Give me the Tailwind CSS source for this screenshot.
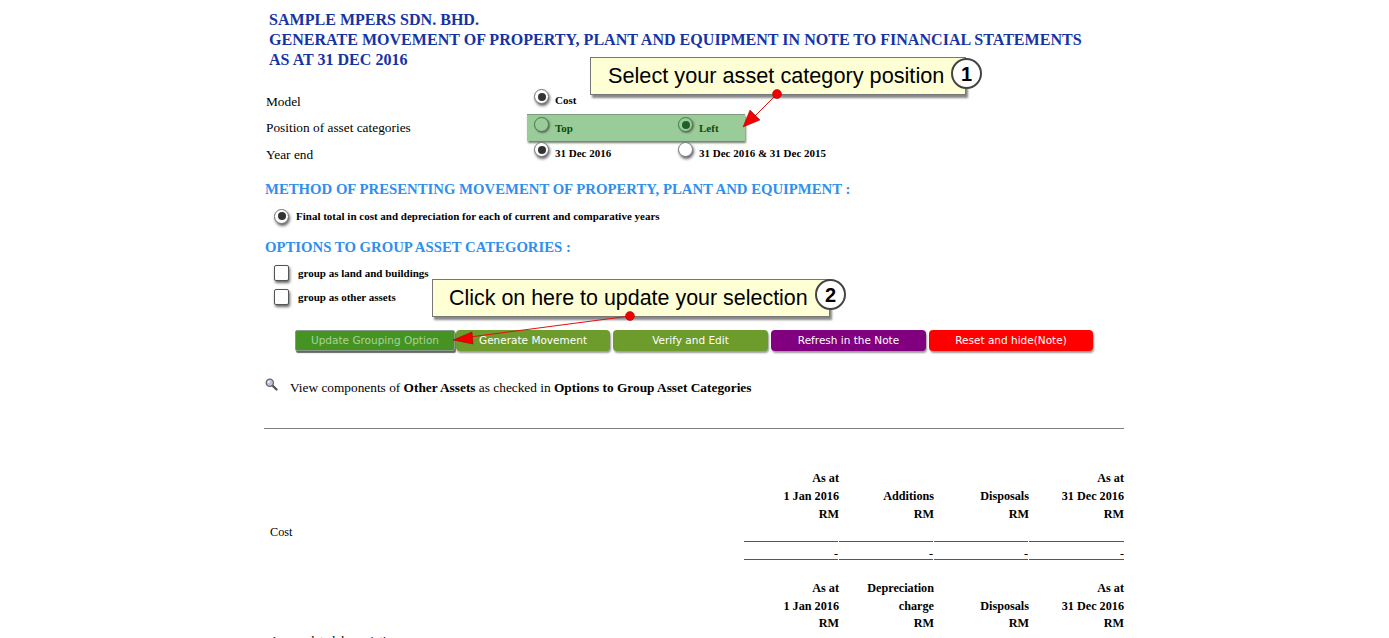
<!DOCTYPE html>
<html lang="en">
<head>
  <meta charset="UTF-8">
  <title>Movement of Property, Plant and Equipment</title>
  <script src="https://cdn.jsdelivr.net/npm/@tailwindcss/browser@4"></script>
</head>
<body class="relative h-[638px] overflow-hidden bg-white text-black font-['Liberation_Serif',serif]">
  <div class="ml-[264px] w-[860px]">
    <!-- Heading -->
    <div class="pl-[5px] pt-[10px] text-[16.06px] leading-[20px] font-bold text-[#1633a3]">
      <div>SAMPLE MPERS SDN. BHD.</div>
      <div>GENERATE MOVEMENT OF PROPERTY, PLANT AND EQUIPMENT IN NOTE TO FINANCIAL STATEMENTS</div>
      <div>AS AT 31 DEC 2016</div>
    </div>

    <!-- Options -->
    <div class="mt-[18px] text-[13.33px]">
      <div class="flex h-[26px] items-center">
        <div class="w-[263px] pl-[2px] pt-[1px]">Model</div>
        <div class="flex w-[218px] items-center pl-[7px]">
          <span class="h-[15px] w-[15px] shrink-0 rounded-full border border-[#777] bg-white shadow-[1px_2px_3px_#666] flex items-center justify-center -mt-[9px]"><span class="h-[8px] w-[8px] rounded-full bg-[#333]"></span></span>
          <span class="ml-[6px] text-[11px] font-bold -mt-[1px]">Cost</span>
        </div>
      </div>
      <div class="flex h-[27px] items-center">
        <div class="w-[263px] pl-[2px]">Position of asset categories</div>
        <div class="flex h-[27px] w-[218px] items-center bg-[#99cc99] pl-[7px] border-t border-[#7d9a7d] shadow-[1px_2px_2px_#777]">
          <div class="flex w-[144px] items-center">
            <span class="h-[15px] w-[15px] shrink-0 rounded-full border border-[#4a7a4a] bg-[#99cc99] shadow-[1px_1px_2px_#666] -mt-[7px]"></span>
            <span class="ml-[6px] text-[11px] font-bold text-[#0f4a0f]">Top</span>
          </div>
          <div class="flex items-center">
            <span class="h-[15px] w-[15px] shrink-0 rounded-full border border-[#4a7a4a] bg-[#99cc99] shadow-[1px_1px_2px_#666] flex items-center justify-center -mt-[7px]"><span class="h-[8px] w-[8px] rounded-full bg-[#1f5f2a]"></span></span>
            <span class="ml-[6px] text-[11px] font-bold text-[#0f4a0f]">Left</span>
          </div>
        </div>
      </div>
      <div class="flex h-[24px] items-center">
        <div class="w-[263px] pl-[2px] pt-[3px]">Year end</div>
        <div class="flex items-center pl-[7px]">
          <div class="flex w-[144px] items-center">
            <span class="h-[15px] w-[15px] shrink-0 rounded-full border border-[#777] bg-white shadow-[1px_2px_3px_#666] flex items-center justify-center -mt-[7px]"><span class="h-[8px] w-[8px] rounded-full bg-[#333]"></span></span>
            <span class="ml-[6px] text-[11px] font-bold">31 Dec 2016</span>
          </div>
          <div class="flex items-center">
            <span class="h-[15px] w-[15px] shrink-0 rounded-full border border-[#777] bg-white shadow-[1px_2px_3px_#666] -mt-[7px]"></span>
            <span class="ml-[6px] text-[11px] font-bold whitespace-nowrap">31 Dec 2016 &amp; 31 Dec 2015</span>
          </div>
        </div>
      </div>
    </div>

    <!-- Method -->
    <div class="mt-[15px] pl-px text-[14.75px] leading-[18px] font-bold text-[#2f8fee]">METHOD OF PRESENTING MOVEMENT OF PROPERTY, PLANT AND EQUIPMENT :</div>
    <div class="mt-[9px] flex h-[18px] items-center pl-[10px]">
      <span class="h-[15px] w-[15px] shrink-0 rounded-full border border-[#777] bg-white shadow-[1px_2px_3px_#666] flex items-center justify-center"><span class="h-[8px] w-[8px] rounded-full bg-[#333]"></span></span>
      <span class="ml-[7px] text-[11px] font-bold">Final total in cost and depreciation for each of current and comparative years</span>
    </div>

    <!-- Group options -->
    <div class="mt-[13px] pl-px text-[14.75px] leading-[18px] font-bold text-[#2f8fee]">OPTIONS TO GROUP ASSET CATEGORIES :</div>
    <div class="mt-[5px] flex h-[24px] items-center pl-[10px]">
      <span class="h-[16px] w-[15px] shrink-0 rounded-[2px] border border-[#555] bg-white shadow-[1px_2px_3px_#666]"></span>
      <span class="ml-[9px] text-[11px] font-bold">group as land and buildings</span>
    </div>
    <div class="flex h-[24px] items-center pl-[10px]">
      <span class="h-[16px] w-[15px] shrink-0 rounded-[2px] border border-[#555] bg-white shadow-[1px_2px_3px_#666]"></span>
      <span class="ml-[9px] text-[11px] font-bold">group as other assets</span>
    </div>

    <!-- Buttons -->
    <div class="mt-[21px] flex h-[21px] pl-[31px] font-['DejaVu_Sans',sans-serif] text-[10.5px] text-white">
      <div class="flex w-[160px] items-center justify-center rounded-[2px] border border-[#8a9a8a] bg-[#459423] text-[#a9d09a] shadow-[1px_2px_1px_#666]">Update Grouping Option</div>
      <div class="ml-[1px] flex w-[154px] items-center justify-center rounded-[4px] bg-[#6d9b2c] shadow-[1px_2px_2px_#999]">Generate Movement</div>
      <div class="ml-[3px] flex w-[155px] items-center justify-center rounded-[4px] bg-[#6d9b2c] shadow-[1px_2px_2px_#999]">Verify and Edit</div>
      <div class="ml-[3px] flex w-[155px] items-center justify-center rounded-[4px] bg-[#800080] shadow-[1px_2px_2px_#999]">Refresh in the Note</div>
      <div class="ml-[3px] flex w-[164px] items-center justify-center rounded-[4px] bg-[#ff0000] shadow-[1px_2px_2px_#999]">Reset and hide(Note)</div>
    </div>

    <!-- Components link -->
    <div class="mt-[27px] flex h-[20px] items-center text-[13.33px]">
      <svg class="ml-[1px] -mt-[8px] h-[13px] w-[13px]" viewBox="0 0 13 13">
        <path d="M7 7l4.5 4.5" stroke="#555" stroke-width="2.4" stroke-linecap="round"/>
        <circle cx="4.8" cy="4.8" r="3.6" fill="#b9c4dc" stroke="#666" stroke-width="1.3"/>
        <circle cx="3.8" cy="3.8" r="1.2" fill="#eef1f8"/>
      </svg>
      <span class="ml-[12px]">View components of <b>Other Assets</b> as checked in <b>Options to Group Asset Categories</b></span>
    </div>

    <div class="mt-[30px] h-px bg-[#808080]"></div>

    <!-- Movement tables -->
    <div class="mt-[40px] grid grid-cols-[480px_95px_95px_95px_95px] text-[12.2px] leading-[18px] auto-rows-[18px]">
      <div></div><div class="text-right font-bold">As at</div><div></div><div></div><div class="text-right font-bold">As at</div>
      <div></div><div class="text-right font-bold">1 Jan 2016</div><div class="text-right font-bold">Additions</div><div class="text-right font-bold">Disposals</div><div class="text-right font-bold">31 Dec 2016</div>
      <div></div><div class="text-right font-bold">RM</div><div class="text-right font-bold">RM</div><div class="text-right font-bold">RM</div><div class="text-right font-bold">RM</div>
      <div class="pl-[6px]">Cost</div><div></div><div></div><div></div><div></div>
      <div></div><div class="mr-px border-t border-[#555] pt-[2px] text-right">-</div><div class="mr-px border-t border-[#555] pt-[2px] text-right">-</div><div class="mr-px border-t border-[#555] pt-[2px] text-right">-</div><div class="border-t border-[#555] pt-[2px] text-right">-</div>
      <div></div><div class="mr-px border-t border-[#555]"></div><div class="mr-px border-t border-[#555]"></div><div class="mr-px border-t border-[#555]"></div><div class="border-t border-[#555]"></div>
    </div>
    <div class="mt-[2px] grid grid-cols-[480px_95px_95px_95px_95px] text-[12.2px] leading-[18px] auto-rows-[17.5px]">
      <div></div><div class="text-right font-bold">As at</div><div class="text-right font-bold">Depreciation</div><div></div><div class="text-right font-bold">As at</div>
      <div></div><div class="text-right font-bold">1 Jan 2016</div><div class="text-right font-bold">charge</div><div class="text-right font-bold">Disposals</div><div class="text-right font-bold">31 Dec 2016</div>
      <div></div><div class="text-right font-bold">RM</div><div class="text-right font-bold">RM</div><div class="text-right font-bold">RM</div><div class="text-right font-bold">RM</div>
      <div class="pl-[6px]">Accumulated depreciation</div>
    </div>
  </div>

  <!-- Callout 1 -->
  <div class="absolute left-[590px] top-[57px] flex h-[38px] w-[376px] items-center border border-[#777] bg-[#ffffd5] pl-[17px] font-['Liberation_Sans',sans-serif] text-[21.7px] shadow-[2px_3px_2px_#888]">Select your asset category position</div>
  <div class="absolute left-[951px] top-[58px] flex h-[31px] w-[31px] items-center justify-center rounded-full border-2 border-[#444] bg-white font-['Liberation_Sans',sans-serif] text-[20px] font-bold">1</div>

  <!-- Callout 2 -->
  <div class="absolute left-[432px] top-[279px] flex h-[38px] w-[398px] items-center border border-[#777] bg-[#ffffd5] pl-[16px] font-['Liberation_Sans',sans-serif] text-[21.45px] shadow-[2px_3px_2px_#888]">Click on here to update your selection</div>
  <div class="absolute left-[815px] top-[279px] flex h-[31px] w-[31px] items-center justify-center rounded-full border-2 border-[#444] bg-white font-['Liberation_Sans',sans-serif] text-[20px] font-bold">2</div>

  <!-- Arrows -->
  <svg class="absolute left-0 top-0 h-[638px] w-[1389px]" viewBox="0 0 1389 638">
    <line x1="777" y1="94" x2="755" y2="116" stroke="#e01010" stroke-width="1"/>
    <polygon points="743,127 750,110 760,120" fill="#f00000" stroke="#a00000" stroke-width="0.5"/>
    <circle cx="777" cy="94" r="4.5" fill="#f00000" stroke="#900" stroke-width="0.5"/>
    <line x1="630" y1="316" x2="470" y2="337" stroke="#e01010" stroke-width="1"/>
    <polygon points="453,340 472,332 473,344" fill="#f00000" stroke="#a00000" stroke-width="0.5"/>
    <circle cx="630" cy="316" r="4.5" fill="#f00000" stroke="#900" stroke-width="0.5"/>
  </svg>
</body>
</html>
